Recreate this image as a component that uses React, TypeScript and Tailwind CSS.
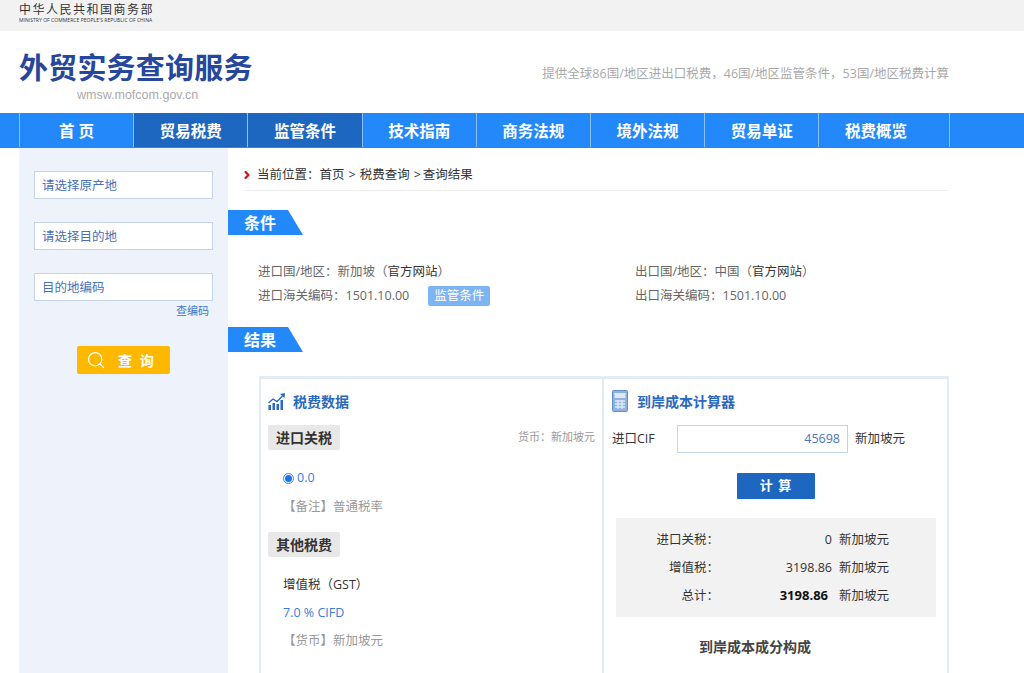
import { ChevronRight, Search } from "lucide-react";

const NAV = ["首 页", "贸易税费", "监管条件", "技术指南", "商务法规", "境外法规", "贸易单证", "税费概览"];

function SectionTag({ title }: { title: string }) {
  return (
    <div className="flex h-[25px] w-[75px] items-center bg-[#2389fb] pl-[16px] text-[16px] font-bold text-white [clip-path:polygon(0_0,60px_0,75px_100%,0_100%)]">
      {title}
    </div>
  );
}

function SideInput({ label }: { label: string }) {
  return (
    <div className="flex h-[28px] w-[179px] items-center border border-[#c5d5e8] bg-white pl-[7px] pt-[2px] text-[12.5px] text-[#4a6fb5]">
      {label}
    </div>
  );
}

function CostRow({ label, value, bold }: { label: string; value: string; bold?: boolean }) {
  return (
    <div className="flex h-[28px] items-center text-[12.5px] text-[#333]">
      <span className="w-[103px] text-right">{label}</span>
      <span className={bold ? "w-[113px] pr-[4px] text-right text-[13px] font-bold text-[#111]" : "w-[113px] text-right"}>{value}</span>
      <span className="ml-[7px]">新加坡元</span>
    </div>
  );
}

export default function App() {
  return (
    <div className="h-[673px] w-[1024px] overflow-hidden bg-white font-['Open_Sans','Noto_Sans_CJK_SC',sans-serif]">
      <div className="h-[31px] bg-[#f2f2f2] pl-[19px] pt-[3px]">
        <div className="text-[12px] leading-[13px] tracking-[1.5px] text-[#333]">中华人民共和国商务部</div>
        <div className="mt-[1px] whitespace-nowrap text-[5px] leading-[7px] tracking-[0.05px] text-[#333]">MINISTRY OF COMMERCE PEOPLE'S REPUBLIC OF CHINA</div>
      </div>

      <div className="flex h-[82px] pl-[19px] pr-[75px]">
        <div className="flex flex-col">
          <div className="mt-[19px] text-[29px] font-bold leading-[36px] tracking-[0.2px] text-[#26479b]">外贸实务查询服务</div>
          <div className="ml-[58px] mt-[1px] font-['Liberation_Sans',sans-serif] text-[12.5px] leading-[16px] text-[#aaa]">wmsw.mofcom.gov.cn</div>
        </div>
        <div className="ml-auto mt-[34px] text-[12.5px] leading-[18px] text-[#a9a9a9]">提供全球86国/地区进出口税费，46国/地区监管条件，53国/地区税费计算</div>
      </div>

      <div className="flex h-[35px] bg-[#2389fb] pl-[19px]">
        {NAV.map((item, i) => (
          <div
            key={item}
            className={
              (i === 1 || i === 2 ? "bg-[#1e67c0] " : "") +
              "flex h-[34px] w-[114.2px] items-center justify-center border-l border-[#8cc0f5] pt-[3px] text-[15.5px] font-bold text-white"
            }
          >
            {item}
          </div>
        ))}
        <div className="h-[34px] w-[17px] border-r border-[#8cc0f5]" />
      </div>

      <div className="flex pl-[19px]">
        <aside className="h-[525px] w-[209px] shrink-0 bg-[#eef3fb] pl-[15px] pt-[23px]">
          <SideInput label="请选择原产地" />
          <div className="mt-[23px]">
            <SideInput label="请选择目的地" />
          </div>
          <div className="mt-[23px]">
            <SideInput label="目的地编码" />
          </div>
          <div className="mt-[2px] w-[175px] text-right text-[11px] leading-[15px] text-[#3f79c8]">查编码</div>
          <div className="ml-[43px] mt-[28px] flex h-[28px] w-[93px] items-center rounded-[2px] bg-[#ffb800] pl-[9px] text-[14px] font-bold text-white">
            <Search size={20} strokeWidth={1.5} />
            <span className="ml-[12px] tracking-[2px]">查 询</span>
          </div>
        </aside>

        <main className="flex-1">
          <div className="ml-[15px] flex h-[43px] w-[706px] items-center border-b border-[#eee] pt-[12px] text-[12.5px] text-[#333]">
            <ChevronRight size={12} strokeWidth={4.5} className="-ml-[2px] mr-[4px] text-[#c8161d]" />
            <span>当前位置：首页</span>
            <span className="ml-[4px]">&gt;</span>
            <span className="ml-[4px]">税费查询</span>
            <span className="ml-[4px]">&gt;</span>
            <span className="ml-[2px]">查询结果</span>
          </div>

          <div className="mt-[19px]">
            <SectionTag title="条件" />
          </div>

          <div className="ml-[30px] mt-[25px] grid grid-cols-[377px_1fr] text-[12.5px] leading-[24px] text-[#666]">
            <div>
              进口国/地区：新加坡（<span className="text-[#333]">官方网站</span>）
            </div>
            <div>
              出口国/地区：中国（<span className="text-[#333]">官方网站</span>）
            </div>
            <div className="flex items-center">
              进口海关编码：1501.10.00
              <span className="ml-[19px] flex h-[20px] w-[62px] items-center justify-center rounded-[2px] bg-[#7db5f3] text-white">监管条件</span>
            </div>
            <div>出口海关编码：1501.10.00</div>
          </div>

          <div className="mt-[19px]">
            <SectionTag title="结果" />
          </div>

          <div className="ml-[31px] mt-[24px] flex h-[297px] w-[690px] border-x-2 border-t-[3px] border-[#e3ebf3]">
            <section className="w-[343px] shrink-0 border-r-2 border-[#e3ebf3] pl-[7px] pr-[7px]">
              <div className="mt-[12px] flex h-[20px] items-center text-[14px] font-bold text-[#2a69c0]">
                <svg width="18" height="17" viewBox="0 0 18 17" fill="#2a69c0" className="mr-[7px]">
                  <rect x="0.5" y="12" width="2.5" height="5" />
                  <rect x="4.5" y="10" width="2.5" height="7" />
                  <rect x="8.5" y="11" width="2.5" height="6" />
                  <rect x="12.5" y="7" width="2.5" height="10" />
                  <path d="M0.5 10 L5 6 L9 8.5 L14.5 3" fill="none" stroke="#2a69c0" strokeWidth="1.4" />
                  <path d="M12 1 L17 0 L16.5 5 Z" />
                </svg>
                税费数据
              </div>
              <div className="mt-[14px] flex items-center justify-between">
                <div className="flex h-[25px] w-[72px] items-center justify-center rounded-[2px] bg-[#e8e8e8] text-[14px] font-bold text-[#333]">进口关税</div>
                <div className="text-[11px] text-[#999]">货币：新加坡元</div>
              </div>
              <div className="ml-[15px] mt-[18px] flex h-[20px] items-center text-[12.5px] text-[#2f80e8]">
                <span className="flex h-[11px] w-[11px] items-center justify-center rounded-full border border-[#2389fb] bg-white">
                  <span className="h-[7px] w-[7px] rounded-full bg-[#1a73e8]" />
                </span>
                <span className="ml-[3px]">0.0</span>
              </div>
              <div className="ml-[15px] mt-[9px] text-[12.5px] leading-[20px] text-[#999]">【备注】普通税率</div>
              <div className="mt-[15px] flex h-[25px] w-[72px] items-center justify-center rounded-[2px] bg-[#e8e8e8] text-[14px] font-bold text-[#333]">其他税费</div>
              <div className="ml-[15px] mt-[14px] text-[12.5px] leading-[28px]">
                <div className="text-[#333]">增值税（GST）</div>
                <div className="text-[#3a7bd5]">7.0 % CIFD</div>
              </div>
              <div className="ml-[15px] mt-[2px] text-[12.5px] leading-[24px] text-[#999]">【货币】新加坡元</div>
            </section>

            <section className="flex-1 pl-[8px]">
              <div className="mt-[11px] flex h-[22px] items-center text-[14px] font-bold text-[#2a69c0]">
                <svg width="16" height="22" viewBox="0 0 16 22" className="mr-[9px]">
                  <rect x="0.5" y="0.5" width="15" height="21" rx="1" fill="#8fb2df" stroke="#5f8fce" />
                  <rect x="2.5" y="3" width="11" height="5" fill="#dfe9f6" />
                  <path d="M3 11h10M3 14h10M3 17h10M6 10v9M10 10v9" stroke="#dfe9f6" strokeWidth="1.4" />
                </svg>
                到岸成本计算器
              </div>
              <div className="mt-[13px] flex h-[28px] items-center text-[12.5px] text-[#333]">
                <span className="w-[65px]">进口CIF</span>
                <div className="flex h-[28px] w-[171px] items-center justify-end border border-[#c5d5e8] pr-[7px] text-[#4a76bd]">45698</div>
                <span className="ml-[7px]">新加坡元</span>
              </div>
              <div className="ml-[125px] mt-[20px] flex h-[26px] w-[78px] items-center justify-center rounded-[1px] bg-[#1e67c0] text-[13px] font-bold tracking-[1px] text-white">计 算</div>
              <div className="ml-[4px] mt-[19px] w-[320px] bg-[#f2f2f2] pb-[7px] pt-[8px]">
                <CostRow label="进口关税：" value="0" />
                <CostRow label="增值税：" value="3198.86" />
                <CostRow label="总计：" value="3198.86" bold />
              </div>
              <div className="ml-[87px] mt-[19px] text-[14px] font-bold text-[#444]">到岸成本成分构成</div>
            </section>
          </div>
        </main>
      </div>
    </div>
  );
}
